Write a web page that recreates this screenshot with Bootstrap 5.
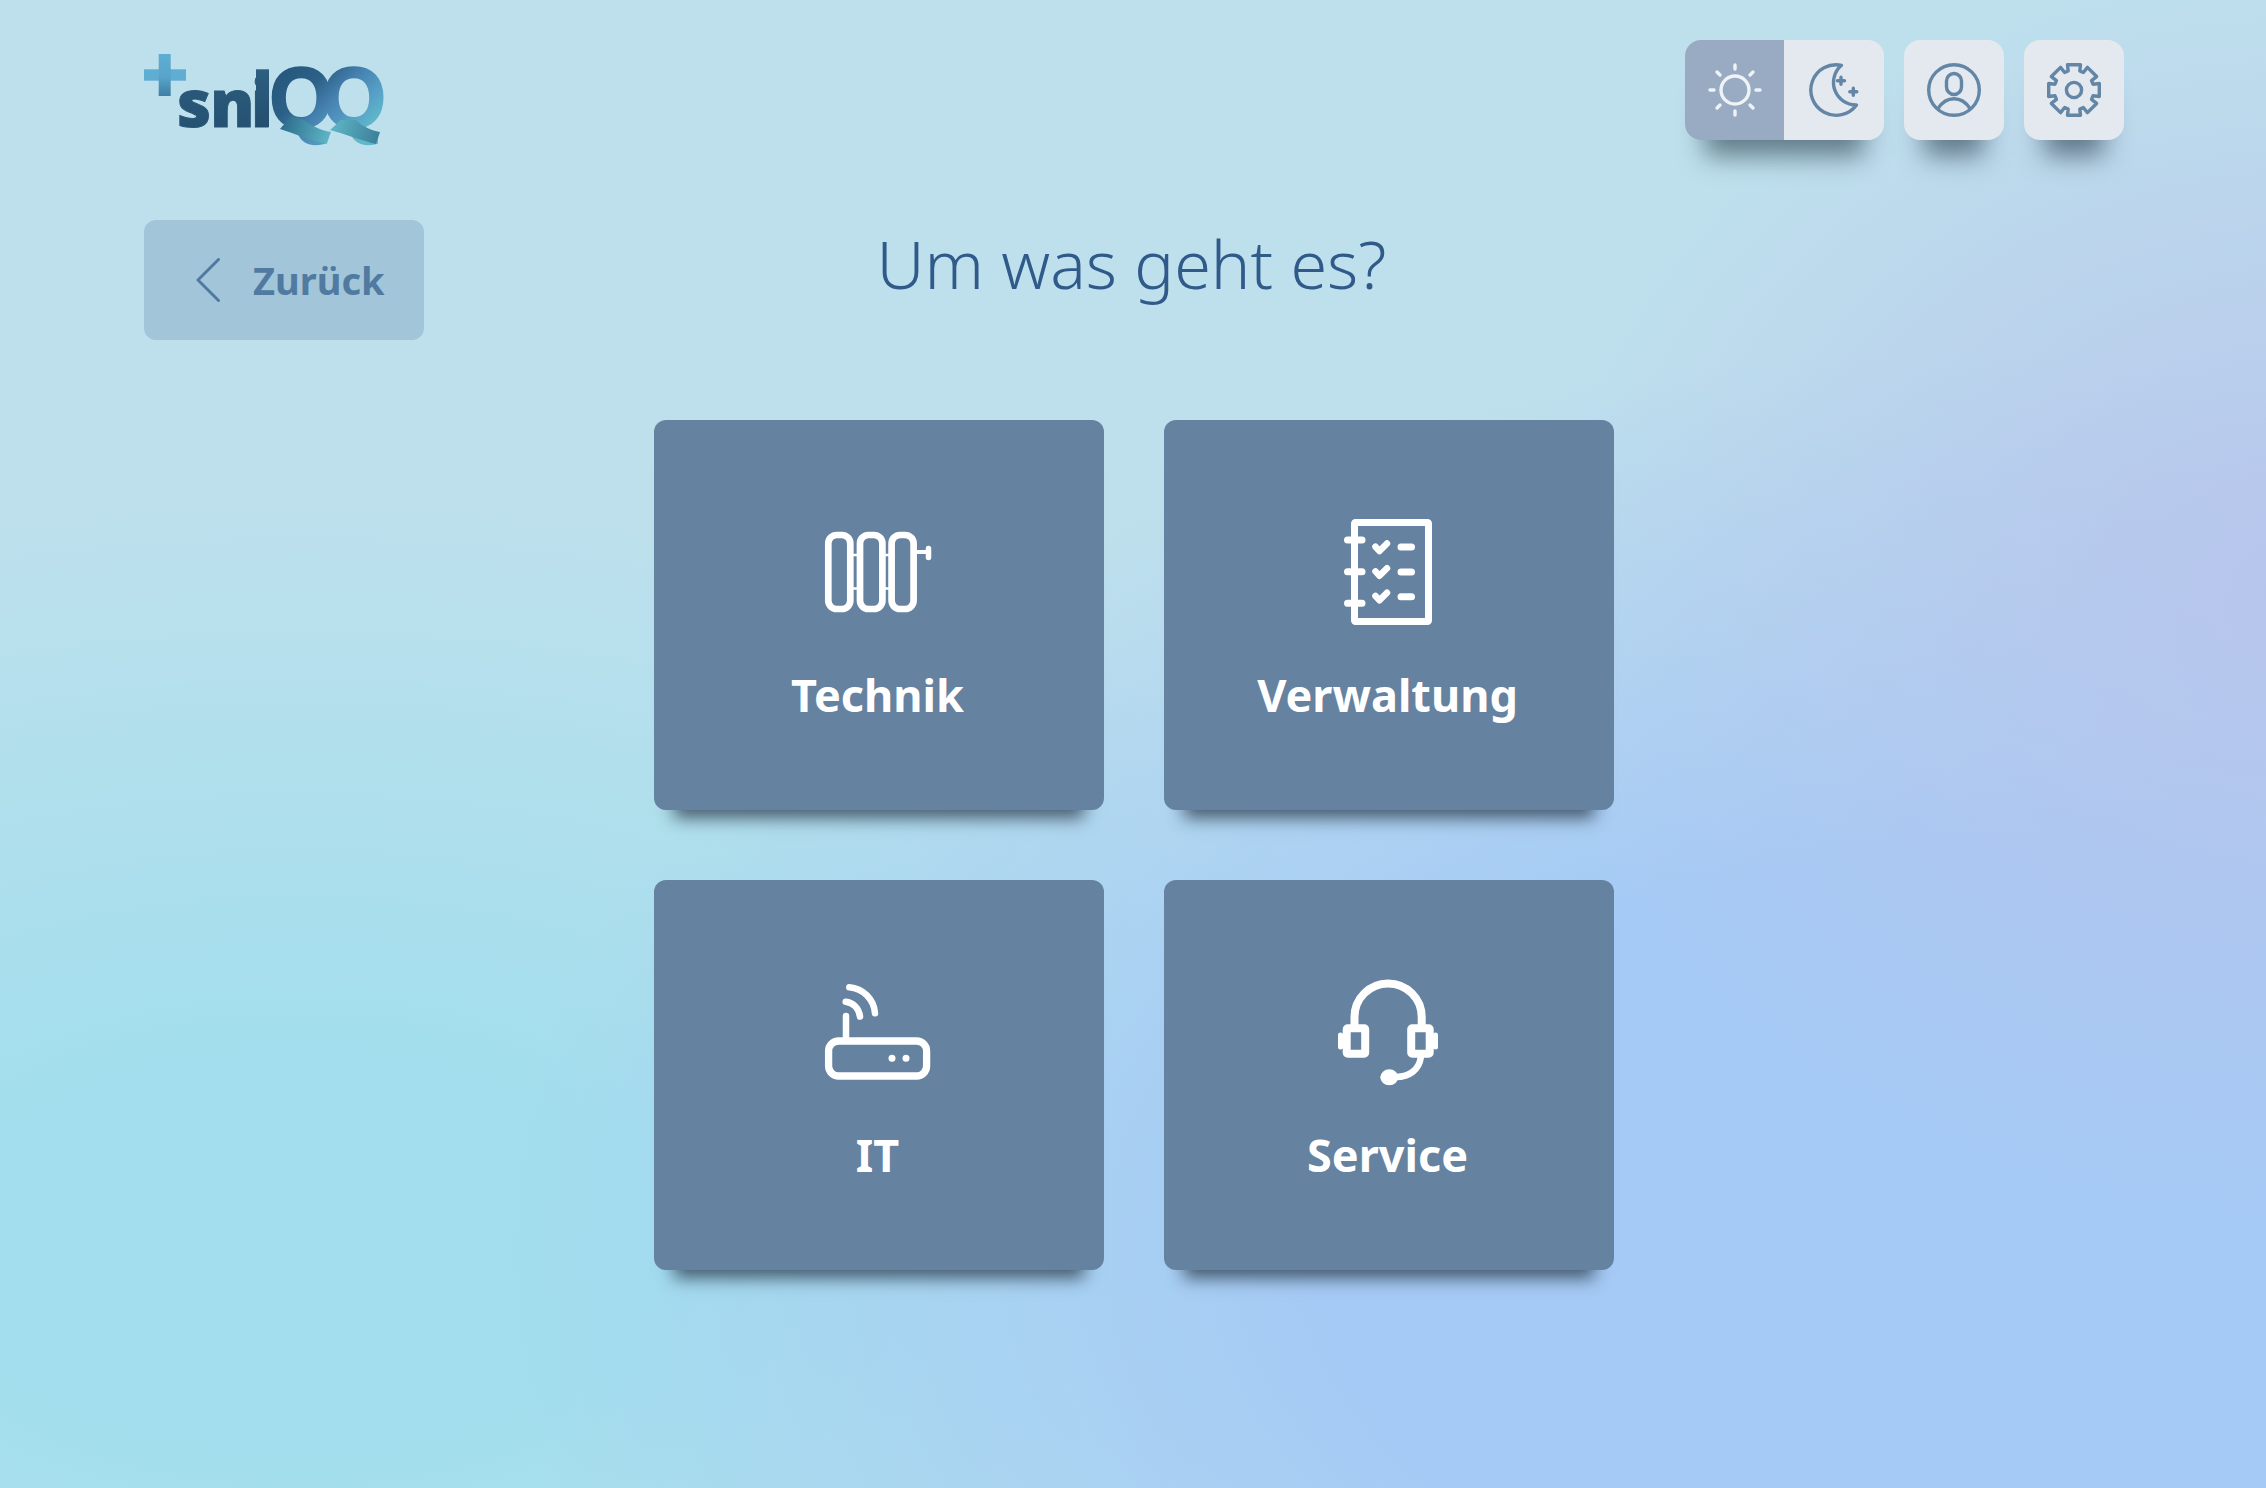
<!DOCTYPE html>
<html lang="de">
<head>
<meta charset="utf-8">
<title>Um was geht es?</title>
<link href="https://cdn.jsdelivr.net/npm/bootstrap@5.3.0/dist/css/bootstrap.min.css" rel="stylesheet">
<style>
html,body{height:100%}
body{font-family:"Noto Sans","Open Sans",sans-serif;min-height:1488px;background:
 radial-gradient(ellipse 800px 640px at 2320px 590px,#b7c4ec 0,rgba(183,196,236,0) 100%),
 radial-gradient(ellipse 1500px 900px at 2000px 1250px,#a5caf5 45%,rgba(165,202,245,0) 100%),
 radial-gradient(ellipse 1350px 760px at 300px 1250px,#a2deed 25%,rgba(162,222,237,0) 100%),
 #bee0ec;}
.page-wrap{padding:40px 142px 0 144px}
.top-bar{height:100px}
.logo-box{margin-top:4px;display:block}
.tools-row{gap:20px}
.tile-btn{width:100px;height:100px;padding:0;border:0;border-radius:16px;background:#e3e9ef;box-shadow:0 36px 26px -20px rgba(35,55,70,.6);display:flex;align-items:center;justify-content:center}
.tile-btn:hover{background:#e3e9ef}
.mode-group{border-radius:16px;box-shadow:0 36px 26px -20px rgba(35,55,70,.6)}
.mode-group .tile-btn{box-shadow:none}
.mode-group .tile-btn:first-child{background:#99abc2;border-radius:16px 0 0 16px}
.mode-group .tile-btn:last-child{border-radius:0 16px 16px 0}
.back-row{margin-top:80px;display:grid;grid-template-columns:1fr auto 1fr}
.back-btn{width:280px;height:120px;border:0;border-radius:12px;background:#a3c5d9;color:#507aa0;font-size:38px;font-weight:700;padding:0 0 0 52px;gap:33px;display:flex;align-items:center;line-height:1}
.back-btn:hover{background:#a3c5d9;color:#507aa0}
.main-title{font-size:66.5px;font-weight:350;color:#2f5a8a;line-height:86px;margin:0 0 0 -5px;white-space:nowrap}
.tile-grid{margin-top:80px;display:grid;grid-template-columns:450px 450px;column-gap:60px;row-gap:70px;justify-content:center}
.topic-card{height:390px;border:0;border-radius:12px;background:#6582a1;color:#fff;box-shadow:0 28px 16px -20px rgba(35,50,65,.75);padding-top:92px;align-items:center}
.topic-card svg{display:block}
.topic-name{font-size:45px;font-weight:700;line-height:60px;margin-top:33px;padding-right:3px}
.ic-w{fill:none;stroke:#fff;stroke-linecap:round;stroke-linejoin:round}
.ic-b{fill:none;stroke:#6486a6;stroke-width:3.4;stroke-linecap:round;stroke-linejoin:round}
.ic-s{fill:none;stroke:#eef3f7;stroke-width:3.4;stroke-linecap:round}
.logo-sni{font-family:"Open Sans",sans-serif;font-weight:800;font-size:66px;letter-spacing:-1px}
.logo-qq{font-family:"Liberation Sans",sans-serif;font-weight:700;font-size:86px;letter-spacing:-11.5px}
</style>
</head>
<body>
<div class="page-wrap">
  <header class="top-bar d-flex justify-content-between align-items-start">
    <svg class="logo-box" width="250" height="110" viewBox="0 -10 250 110" role="img" aria-label="sniQQ">
      <defs>
        <linearGradient id="gPlus" x1="0" y1="0" x2="0" y2="1"><stop offset="0" stop-color="#5eadd2"/><stop offset=".55" stop-color="#58a4ca"/><stop offset="1" stop-color="#3f7fa3"/></linearGradient>
        <linearGradient id="gSni" x1="0" y1="0" x2="0" y2="1"><stop offset="0" stop-color="#2c5f80"/><stop offset="1" stop-color="#244e6e"/></linearGradient>
        <linearGradient id="gQ" x1=".02" y1=".15" x2=".85" y2=".85"><stop offset="0" stop-color="#24557a"/><stop offset=".38" stop-color="#2c6086"/><stop offset=".6" stop-color="#4681b0"/><stop offset=".85" stop-color="#58a3c9"/><stop offset="1" stop-color="#5fb8c8"/></linearGradient>
        <linearGradient id="gTail" gradientUnits="userSpaceOnUse" x1="136" y1="70" x2="186" y2="86"><stop offset="0" stop-color="#2b6a8a"/><stop offset="1" stop-color="#5fb8c8"/></linearGradient>
        <linearGradient id="gTail2" gradientUnits="userSpaceOnUse" x1="186" y1="70" x2="236" y2="86"><stop offset="0" stop-color="#5fb8c8"/><stop offset="1" stop-color="#3b7d98"/></linearGradient>
      </defs>
      <rect x="0" y="15.3" width="42" height="11.4" fill="#5eadd2"/>
      <rect x="14.7" y="0" width="12" height="42" fill="url(#gPlus)"/>
      <text class="logo-sni" x="33" y="73" fill="url(#gSni)" stroke="#2a5878" stroke-width="1">sn<tspan x="107">i</tspan></text>
      <rect x="112" y="15.3" width="13" height="57.7" fill="url(#gSni)"/>
      <text class="logo-qq" transform="translate(125.6 73) scale(.95 1)" fill="url(#gQ)" stroke="url(#gQ)" stroke-width="2.4">QQ</text>
      <path d="M136 75 L147 62 L160 66 C168 72 176 76 187 78 L182.700 90 C168 87 152 80 136 75Z" fill="url(#gTail)"/>
      <path d="M186 76 L197 66 L212 66 C218 72 226 76 236 78 L232 90 C218 87 202 80 186 76Z" fill="url(#gTail2)"/>
    </svg>
    <div class="tools-row d-flex">
      <div class="btn-group mode-group" role="group">
        <button class="btn tile-btn" type="button" aria-label="Hell">
          <svg width="100" height="100" viewBox="0 0 100 100"><circle class="ic-s" cx="50" cy="50" r="14"/><path class="ic-s" d="M50 25V29M50 71V75M25 50H29M71 50H75M32 32L35 35M65 65L68 68M32 68L35 65M65 35L68 32"/></svg>
        </button>
        <button class="btn tile-btn" type="button" aria-label="Dunkel">
          <svg width="100" height="100" viewBox="0 0 100 100"><path class="ic-b" d="M57.500 25.300A25.300 25.300 0 1 0 72.500 65A22.500 22.500 0 0 1 57.500 25.300Z"/><path class="ic-b" d="M57 37.200V44.200M53.500 40.700H60.500M69.300 48.200V55.200M65.800 51.700H72.800"/></svg>
        </button>
      </div>
      <button class="btn tile-btn" type="button" aria-label="Profil">
        <svg width="100" height="100" viewBox="0 0 100 100"><circle class="ic-b" cx="50" cy="50" r="25.300"/><rect class="ic-b" x="42.500" y="33.500" width="15" height="21" rx="7.500"/><path class="ic-b" d="M34 68.500C39 61 44 58.800 50 58.800S61 61 66 68.500"/></svg>
      </button>
      <button class="btn tile-btn" type="button" aria-label="Einstellungen">
        <svg width="100" height="100" viewBox="0 0 100 100"><g transform="translate(50 50)"><path class="ic-b" d="M-5.800-19L-6.500-25.300H6.500L5.800-19L9.330-17.540L13.440-22.630L22.630-13.440L17.540-9.330L19-5.800L25.300-6.500V6.500L19 5.800L17.540 9.330L22.630 13.440L13.440 22.630L9.330 17.540L5.800 19L6.500 25.300H-6.500L-5.800 19L-9.330 17.540L-13.440 22.630L-22.630 13.440L-17.540 9.330L-19 5.800L-25.300 6.500V-6.500L-19-5.800L-17.540-9.330L-22.630-13.440L-13.440-22.630L-9.330-17.540Z"/><circle class="ic-b" r="7.600"/></g></svg>
      </button>
    </div>
  </header>

  <div class="back-row">
    <div>
      <button class="btn back-btn" type="button">
        <svg width="24" height="44" viewBox="0 0 24 44"><path d="M22.500 1.500L2 22L22.500 42.500" fill="none" stroke="#507aa0" stroke-width="3" stroke-linecap="round" stroke-linejoin="round"/></svg>
        <span>Zurück</span>
      </button>
    </div>
    <h1 class="main-title">Um was geht es?</h1>
    <div></div>
  </div>

  <main class="tile-grid">
    <a class="card topic-card text-decoration-none">
      <svg width="120" height="120" viewBox="0 0 120 120"><g class="ic-w" stroke-width="6.700"><rect x="9.300" y="23" width="22" height="74" rx="8.500"/><rect x="41" y="23" width="22.400" height="74" rx="8.500"/><rect x="72.600" y="23" width="22" height="74" rx="8.500"/><path stroke-width="2.500" d="M33 43H39M33 76.500H39M65 43H71M65 76.500H71"/><path stroke-width="4" d="M97 40H108"/><path stroke-width="5.500" d="M109.500 36.500V45.500"/></g></svg>
      <div class="topic-name">Technik</div>
    </a>
    <a class="card topic-card text-decoration-none">
      <svg width="120" height="120" viewBox="0 0 120 120"><g class="ic-w" stroke-width="7"><rect x="25.500" y="10.500" width="74" height="99" rx="1"/><path d="M18.500 28H33M18.500 59.700H33M18.500 91.300H33M72 35H82.500M72 60H82.500M72 84.700H82.500"/><path stroke-width="6.500" d="M46.500 34.700L50.500 39L58 31.500M46.500 59.400L50.500 63.700L58 56.200M46.500 84L50.500 88.300L58 80.800"/></g></svg>
      <div class="topic-name">Verwaltung</div>
    </a>
    <a class="card topic-card text-decoration-none">
      <svg width="120" height="120" viewBox="0 0 120 120"><g class="ic-w" stroke-width="7.300"><rect x="9.600" y="69" width="98" height="35" rx="10"/><path stroke-width="6.500" d="M27 44V66M26.700 29.700C34 30.500 40 36 41 44.500M30.300 15.300C44 16.500 55 27 56 41.300"/></g><circle cx="73" cy="86.300" r="3.500" fill="#fff"/><circle cx="87" cy="86.300" r="3.500" fill="#fff"/></svg>
      <div class="topic-name">IT</div>
    </a>
    <a class="card topic-card text-decoration-none">
      <svg width="120" height="120" viewBox="0 0 120 120"><g class="ic-w" stroke-width="8"><path stroke-linecap="butt" d="M25.500 53V45A33.600 33.600 0 0 1 92.700 45V53"/><rect x="17.700" y="56.300" width="18.500" height="25.400" rx="1"/><rect x="82.200" y="56.300" width="18.500" height="25.400" rx="1"/><path stroke-width="5" d="M11.500 63V75M106.500 63V75"/><path stroke-width="6.500" d="M91.700 86C90 97 81 105 67 105"/></g><ellipse cx="60.300" cy="105.300" rx="9" ry="8" fill="#fff"/></svg>
      <div class="topic-name">Service</div>
    </a>
  </main>
</div>
<script src="https://cdn.jsdelivr.net/npm/bootstrap@5.3.0/dist/js/bootstrap.bundle.min.js"></script>
</body>
</html>
